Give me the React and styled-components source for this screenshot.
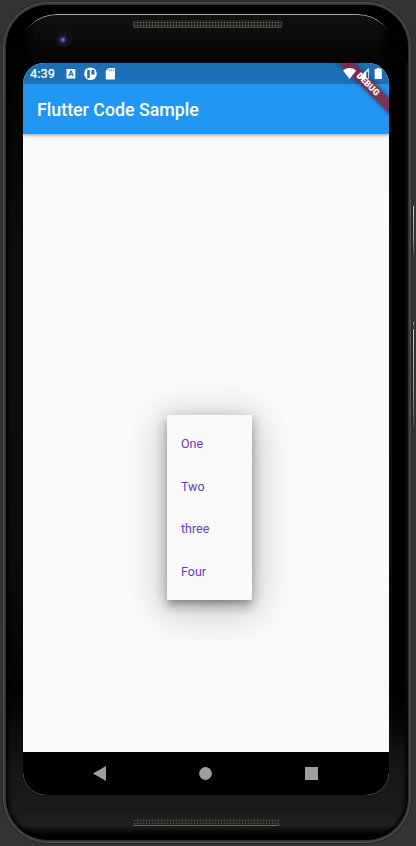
import React from "react";
import styled, { createGlobalStyle } from "styled-components";

const GlobalStyle = createGlobalStyle`
  *, *::before, *::after { box-sizing: border-box; }
  body { margin: 0; background: #323335; font-family: Roboto, sans-serif; }
`;

const Stage = styled.main`
  position: relative;
  width: 416px;
  height: 846px;
  padding: 2px 5px 3px 3px;
  overflow: hidden;
  background: #323335;
`;

const Chassis = styled.div`
  height: 841px;
  padding: 2px;
  border: 1px solid #505050;
  border-radius: 45px;
  background: #303030;
  box-shadow: 0 0 0 1px #292929, inset 0 0 0 1px #3f3f3f;
`;

const Body = styled.div`
  position: relative;
  display: flex;
  flex-direction: column;
  height: 835px;
  padding: 0 16px 0 17px;
  border-radius: 42px;
  overflow: hidden;
  background: linear-gradient(#000 0, #020202 60px, #0d0d0d 250px, #0c0c0c 550px, #030303 690px, #171717 765px, #1a1a1a 805px, #202020 820px, #000 830px);
  box-shadow: inset 0 0 4px 2px #000;
`;

const SideShade = styled.div`
  position: absolute;
  inset: 58px 0 90px auto;
  width: 16px;
  background: linear-gradient(90deg, #000 0 12px, #111);
  mask-image: linear-gradient(#000 88%, transparent);
`;

const GlassEdge = styled.div`
  position: absolute;
  top: 9px;
  left: 14px;
  right: 14px;
  height: 50px;
  border-top: 1.4px solid #a4aaa7;
  border-radius: 36px 36px 0 0;
  background: linear-gradient(#111, #030303);
  mask-image: linear-gradient(90deg, transparent 3px, #000 16px calc(100% - 16px), transparent calc(100% - 3px));
`;

const TopBezel = styled.div`
  position: relative;
  display: flex;
  flex: 0 0 58px;
  padding: 15px 0 0 33px;
`;

const Camera = styled.div`
  width: 16px;
  height: 16px;
  margin-top: 11px;
  border: 1px solid #1a1a1b;
  border-radius: 50%;
  background: radial-gradient(circle at 42% 55%, #7079c8 0 0.8px, #303a8f 2px, #14172f 4px, #161617 5px, #09090a 8px);
`;

const Speaker = styled.div`
  width: ${({ $bottom }) => ($bottom ? 149 : 151)}px;
  height: 8px;
  margin-left: ${({ $bottom }) => ($bottom ? 109 : 60)}px;
  border: 1px solid #202020;
  border-bottom-color: ${({ $bottom }) => ($bottom ? "#666461" : "#495047")};
  border-radius: 4px;
  background: #0d0c0b radial-gradient(circle, ${({ $bottom }) => ($bottom ? "#5c5750" : "#786f68")} 0.5px, #24201b 1.1px) 0 0 / 3px 3px;
`;

const Screen = styled.section`
  position: relative;
  display: flex;
  flex-direction: column;
  flex: 0 0 732px;
  width: 366px;
  overflow: hidden;
  border-radius: 21px 21px 23px 23px;
  background: #fafafa;
`;

const StatusBar = styled.header`
  position: relative;
  z-index: 2;
  display: flex;
  align-items: center;
  height: 21px;
  padding: 0 6px 0 7px;
  background: #1b70b7;
  color: #fff;
`;

const Clock = styled.time`
  width: 36px;
  font-size: 12.7px;
  font-weight: 500;
  line-height: 21px;
`;

const StatusIcons = styled.svg`
  display: block;
  flex: none;
  width: ${({ $width }) => $width}px;
  height: 21px;
`;

const AppBar = styled.div`
  position: relative;
  z-index: 1;
  display: flex;
  flex: 0 0 50px;
  align-items: center;
  padding: 2px 14px 0;
  background: #2196f3;
  box-shadow: 0 1px 4px rgba(0, 0, 0, 0.4);
`;

const Title = styled.h1`
  margin: 0;
  color: #fff;
  font-size: 17.8px;
  font-weight: 500;
  line-height: 24px;
`;

const DebugBanner = styled.div`
  position: absolute;
  z-index: 3;
  top: 15.5px;
  left: 304px;
  width: 82px;
  height: 10.5px;
  transform: rotate(45deg);
  background: rgba(145, 28, 48, 0.8);
  box-shadow: 0 0 5px rgba(0, 0, 0, 0.45);
  color: #fff;
  font-size: 8.8px;
  font-weight: 900;
  line-height: 10.5px;
  text-align: center;
`;

const Radios = styled.div`
  position: absolute;
  z-index: 4;
  top: 0;
  right: 6px;
`;

const Content = styled.div`
  display: flex;
  flex: 1;
  align-items: flex-start;
  padding: 281px 0 0 144px;
`;

const Menu = styled.ul`
  width: 85px;
  height: 185px;
  margin: 0;
  padding: 7.6px 0 6.4px;
  border-radius: 1.5px;
  background: #fafafa;
  box-shadow: 0 4px 5px -2px rgba(0, 0, 0, 0.2), 0 7px 10px 1px rgba(0, 0, 0, 0.14),
    0 3px 14px 2px rgba(0, 0, 0, 0.12), 0 7px 38px 6px rgba(0, 0, 0, 0.2);
  list-style: none;
`;

const MenuItem = styled.li`
  display: flex;
  align-items: center;
  height: 42.67px;
  padding-left: 14px;
  color: #673ab7;
  font-size: 12.5px;
  line-height: 20px;
`;

const NavBar = styled.nav`
  display: grid;
  grid-template-columns: repeat(3, 106px);
  flex: 0 0 43px;
  padding: 0 25px 0 23px;
  background: #000;
`;

const NavButton = styled.button`
  display: grid;
  place-items: center;
  padding: 0;
  border: 0;
  background: none;
  color: #9e9e9e;
`;

const BottomBezel = styled.div`
  display: flex;
  flex: 1;
  padding-top: 23px;
`;

const SideKey = styled.div`
  position: absolute;
  top: ${({ $top }) => $top}px;
  right: 2px;
  width: 1.5px;
  height: ${({ $height }) => $height}px;
  border-radius: 1px;
  background: linear-gradient(#d5d5d5, #949494 70%, #555);
  box-shadow: -1px 0 #222;
`;

const items = ["One", "Two", "three", "Four"];

function NotificationIcons() {
  return (
    <StatusIcons $width={56} viewBox="0 0 56 21" fill="#fff">
      <path fillRule="evenodd" d="M.5 6h8.8v9.5H.5zM4.3 7.5 2.2 13.2h1.3l.4-1.2h2.2l.4 1.2h1.3L5.7 7.5zM5 9.2l.7 1.8H4.3z" />
      <circle cx="24.5" cy="10.8" r="6.3" />
      <path d="M21.2 7h2.6v8h-2.6zM25.4 7h3v4.4h-3z" fill="#1b70b7" />
      <path fillRule="evenodd" d="M42.5 5h5.5q1 0 1 1v9.5q0 1-1 1h-7.3q-1 0-1-1V8zM42.8 6.3v2h.8v-2zM44.8 6.3v2h.8v-2zM46.8 6.3v2h.8v-2z" />
    </StatusIcons>
  );
}

function RadioIcons() {
  return (
    <StatusIcons $width={40} viewBox="0 0 40 21" fill="#fff">
      <path d="M0 7.5Q6.5 2.7 13.2 7.5L6.6 16z" />
      <path d="M14.5 16 25.8 5V8.4h-2.5V16z" />
      <path d="M25.6 8v7.7h-2" fill="none" stroke="#fff" strokeWidth="0.8" />
      <path d="M33.7 5h3v1h2.1v10h-7.1V6h2z" />
    </StatusIcons>
  );
}

export default function App() {
  return (
    <>
      <GlobalStyle />
      <Stage>
        <Chassis>
          <Body>
            <SideShade />
            <GlassEdge />
            <TopBezel>
              <Camera />
              <Speaker />
            </TopBezel>
            <Screen>
              <StatusBar>
                <Clock>4:39</Clock>
                <NotificationIcons />
              </StatusBar>
              <AppBar>
                <Title>Flutter Code Sample</Title>
              </AppBar>
              <DebugBanner>DEBUG</DebugBanner>
              <Radios>
                <RadioIcons />
              </Radios>
              <Content>
                <Menu>
                  {items.map((item) => (
                    <MenuItem key={item}>{item}</MenuItem>
                  ))}
                </Menu>
              </Content>
              <NavBar>
                <NavButton aria-label="Back">
                  <svg width="13" height="15" viewBox="0 0 13 15"><path d="M13 0v15L0 7.5z" fill="currentColor" /></svg>
                </NavButton>
                <NavButton aria-label="Home">
                  <svg width="13" height="13" viewBox="0 0 13 13"><circle cx="6.5" cy="6.5" r="6.4" fill="currentColor" /></svg>
                </NavButton>
                <NavButton aria-label="Overview">
                  <svg width="13" height="13" viewBox="0 0 13 13"><path d="M0 0h13v13H0z" fill="currentColor" /></svg>
                </NavButton>
              </NavBar>
            </Screen>
            <BottomBezel>
              <Speaker $bottom />
            </BottomBezel>
          </Body>
        </Chassis>
        <SideKey $top={206} $height={49} />
        <SideKey $top={322} $height={4} />
        <SideKey $top={329} $height={97} />
      </Stage>
    </>
  );
}
